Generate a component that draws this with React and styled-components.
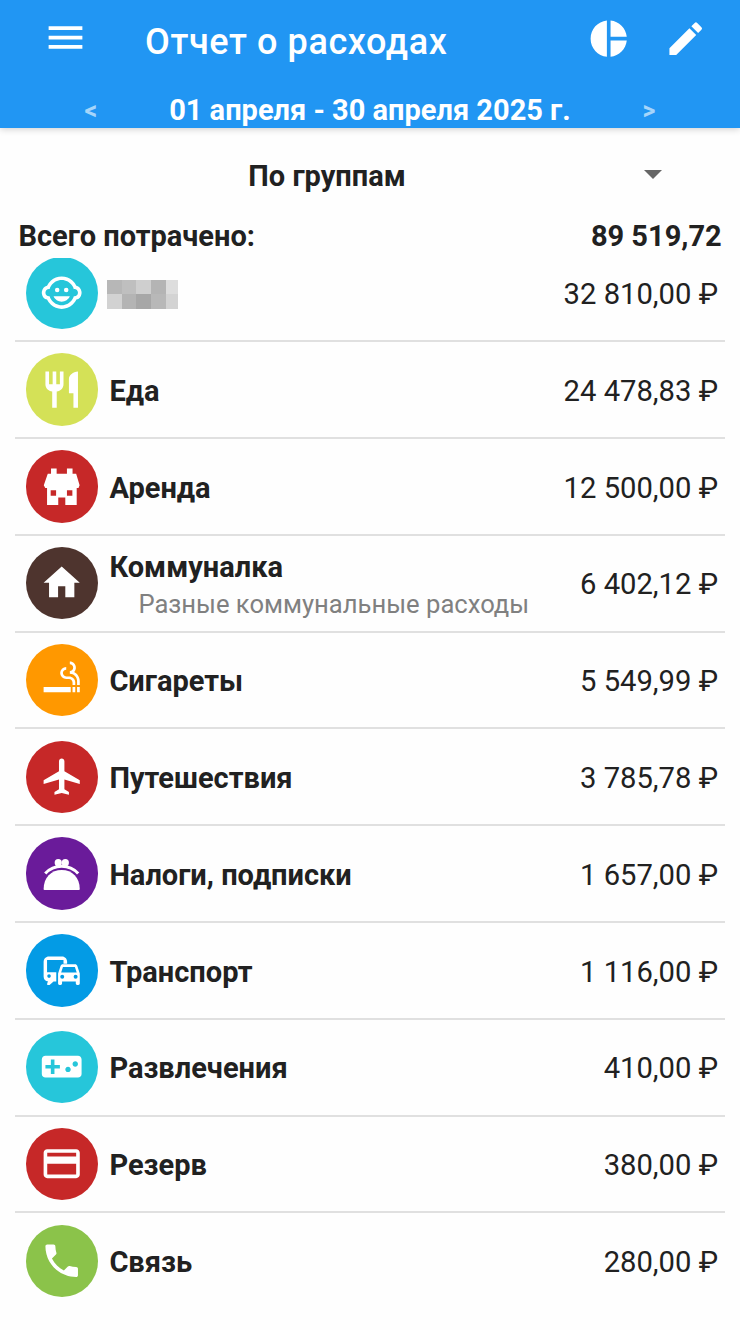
import React from 'react';
import styled, { createGlobalStyle } from 'styled-components';
import {
  MdMenu, MdPieChart, MdEdit, MdChildCare, MdRestaurant, MdHome, MdSmokingRooms,
  MdLocalAirport, MdVideogameAsset, MdCreditCard, MdPhone,
} from 'react-icons/md';

const GlobalStyle = createGlobalStyle`
  *, *::before, *::after { box-sizing: border-box; }
  body { margin: 0; background: #fff; color: #212121; font-family: Roboto, sans-serif; }
`;

const Screen = styled.div`
  display: flex;
  flex-direction: column;
  width: 740px;
  height: 1330px;
  overflow: hidden;
  background: #fefefe;
`;

const Header = styled.header`
  flex: none;
  height: 128px;
  color: #fff;
  background: #2196f3;
  box-shadow: 0 1px 7px rgba(0, 0, 0, 0.2);
`;

const Toolbar = styled.div`
  display: flex;
  align-items: center;
  height: 78px;
  padding: 0 33px 0 42.5px;
`;

const IconButton = styled.button`
  display: flex;
  flex: none;
  padding: 0 0 ${({ $lift = 0 }) => $lift}px;
  border: 0;
  color: inherit;
  background: none;
  margin-left: ${({ $gap = 0 }) => $gap}px;
`;

const Title = styled.h1`
  flex: 1;
  margin: 5px 0 0 57.5px;
  font-size: 36px;
  font-weight: 500;
  line-height: 44px;
  letter-spacing: 0.6px;
  white-space: nowrap;
`;

const PeriodBar = styled.div`
  display: flex;
  align-items: center;
  justify-content: space-between;
  height: 50px;
  padding: 15px 84.5px 0;
`;

const PeriodArrow = styled.button`
  padding: 0;
  border: 0;
  color: #a6d5fa;
  background: none;
  font: 700 25px/30px Roboto, sans-serif;
`;

const Period = styled.span`
  font-size: 29px;
  font-weight: 700;
  line-height: 33px;
  white-space: nowrap;
`;

const GroupSelect = styled.div`
  display: grid;
  grid-template-columns: 1fr 18px;
  align-items: center;
  flex: none;
  height: 93px;
  padding: 2px 78px 0 10px;
`;

const GroupLabel = styled.span`
  font-size: 29px;
  font-weight: 700;
  line-height: 34px;
  text-align: center;
`;

const Caret = styled.span`
  width: 18px;
  border: 9px solid transparent;
  border-top-color: #666;
  border-bottom: 0;
  margin-bottom: 3px;
`;

const Total = styled.div`
  display: flex;
  flex: none;
  justify-content: space-between;
  height: 37px;
  padding: 0 18.3px 0 18.5px;
  font-size: 29px;
  font-weight: 700;
  line-height: 31px;
`;

const List = styled.ul`
  flex: 1;
  margin: 0;
  padding: 0 15px;
  overflow: hidden;
  list-style: none;
`;

const Row = styled.li`
  display: flex;
  align-items: center;
  height: 96.8px;
  padding: 0 7px 0 10.6px;
  border-bottom: 2px solid #e0e0e0;

  &:first-child { margin-top: -12.6px; }
  &:last-child { border-bottom-color: transparent; }
`;

const Badge = styled.span`
  display: flex;
  flex: none;
  align-items: center;
  justify-content: center;
  width: 72.5px;
  height: 72.5px;
  border-radius: 50%;
  color: #fff;
  background: ${({ $color }) => $color};

  svg { margin-right: 0.6px; }
`;

const Info = styled.div`
  flex: 1;
  padding: ${({ $tall }) => ($tall ? 4 : 2.6)}px 0 0 11.3px;
`;

const Name = styled.div`
  font-size: 29px;
  font-weight: 700;
  line-height: 34px;
`;

const Note = styled.div`
  padding: 3px 0 0 29px;
  color: #808080;
  font-size: 25.6px;
  line-height: 34px;
  white-space: nowrap;
`;

const Amount = styled.span`
  padding-top: 2.6px;
  font-size: 29.2px;
  line-height: 34px;
  white-space: nowrap;
`;

const Mosaic = styled.div`
  display: grid;
  grid-template-columns: repeat(4, 14.7px) 12px;
  grid-auto-rows: 14.5px;
  width: 71px;
  margin-left: -2.4px;
`;

const Tile = styled.span`
  background: ${({ $color }) => $color};
`;

const Cottage = () => (
  <svg width="43.4" height="43.4" viewBox="0 0 24 24" fill="currentColor">
    <path fillRule="evenodd" d="M6.1 1.900h3.100v2.900h5.700V1.900H18v2.900h2l1.900 6.400-.6 1.500h-1v9.400h-6.300V18h-3.900v4.100H3.900v-9.400h-1L2.100 11.200 4.300 4.800h1.800zM5.900 14v3h3v-3zm9 0v3h3v-3z" />
  </svg>
);

const Purse = () => (
  <svg width="43.4" height="43.4" viewBox="0 0 24 24">
    <path fill="currentColor" d="M2 20.600C2 14 6.200 9.900 12 9.900S22 14 22 20.600q0 .4-.5.4h-19q-.5 0-.5-.4z" />
    <path fill="none" stroke="currentColor" strokeWidth="1.700" d="M2.900 11.900C5.300 9.300 8.400 7.900 12 7.900s6.700 1.400 9.100 4" />
    <circle cx="10.100" cy="5.900" r="2" fill="currentColor" />
    <circle cx="14" cy="5.900" r="2" fill="currentColor" />
  </svg>
);

const BusAndCar = () => (
  <svg width="43.4" height="43.4" viewBox="0 0 24 24" fill="currentColor">
    <path fillRule="evenodd" d="M12.200 4.100H4.900C3.300 4.100 2 5.400 2 7v8.200c0 1.500 1 2.600 2.500 2.800L4 18.800v1.100h1.300L7.500 18H9v-5.100H3.900V6.100H13v2h2V7c0-1.600-1.200-2.900-2.800-2.900zM5 14a1 1 0 1 1 0 2 1 1 0 0 1 0-2z" />
    <path fillRule="evenodd" d="M20.600 9.300c-.2-.6-.6-.9-1.200-.9h-6.800c-.6 0-1 .3-1.200.9L10 13.500V19c0 .5.300.9.800.9h.6c.5 0 .8-.4.8-.9v-1h7.600v1c0 .5.300.9.800.9h.6c.5 0 .8-.4.8-.9v-5.500zM12.700 9.900h6.600l1 3.100h-8.600zM12.300 14.200a1.100 1.100 0 1 1 0 2.200 1.100 1.100 0 0 1 0-2.200zm7.400 0a1.100 1.100 0 1 1 0 2.200 1.100 1.100 0 0 1 0-2.200z" />
  </svg>
);

const MOSAIC = ['#b7b7b7', '#bfbfbf', '#cfcfcf', '#b4b4b4', '#dddddd', '#d2d2d2', '#b4b4b4', '#a7a7a7', '#b8b8b8', '#d3d3d3'];

const EXPENSES = [
  { amount: '32 810,00 ₽', color: '#26c6da', Icon: MdChildCare },
  { name: 'Еда', amount: '24 478,83 ₽', color: '#d4e157', Icon: MdRestaurant },
  { name: 'Аренда', amount: '12 500,00 ₽', color: '#c62828', Icon: Cottage },
  { name: 'Коммуналка', note: 'Разные коммунальные расходы', amount: '6 402,12 ₽', color: '#4e342e', Icon: MdHome },
  { name: 'Сигареты', amount: '5 549,99 ₽', color: '#ff9800', Icon: MdSmokingRooms },
  { name: 'Путешествия', amount: '3 785,78 ₽', color: '#c62828', Icon: MdLocalAirport },
  { name: 'Налоги, подписки', amount: '1 657,00 ₽', color: '#6a1b9a', Icon: Purse },
  { name: 'Транспорт', amount: '1 116,00 ₽', color: '#039be5', Icon: BusAndCar },
  { name: 'Развлечения', amount: '410,00 ₽', color: '#26c6da', Icon: MdVideogameAsset },
  { name: 'Резерв', amount: '380,00 ₽', color: '#c62828', Icon: MdCreditCard },
  { name: 'Связь', amount: '280,00 ₽', color: '#8bc34a', Icon: MdPhone },
];

export default function App() {
  return (
    <Screen>
      <GlobalStyle />
      <Header>
        <Toolbar>
          <IconButton aria-label="Меню" $lift={3}><MdMenu size={45} /></IconButton>
          <Title>Отчет о расходах</Title>
          <IconButton aria-label="Диаграмма"><MdPieChart size={43.4} /></IconButton>
          <IconButton aria-label="Изменить" $gap={33}><MdEdit size={43.4} /></IconButton>
        </Toolbar>
        <PeriodBar>
          <PeriodArrow>&lt;</PeriodArrow>
          <Period>01 апреля - 30 апреля 2025 г.</Period>
          <PeriodArrow>&gt;</PeriodArrow>
        </PeriodBar>
      </Header>
      <GroupSelect>
        <GroupLabel>По группам</GroupLabel>
        <Caret />
      </GroupSelect>
      <Total>
        <span>Всего потрачено:</span>
        <span>89 519,72</span>
      </Total>
      <List>
        {EXPENSES.map(({ name, note, amount, color, Icon }) => (
          <Row key={amount}>
            <Badge $color={color}><Icon size={43.4} /></Badge>
            <Info $tall={Boolean(note)}>
              {name ? <Name>{name}</Name> : (
                <Mosaic>{MOSAIC.map((tile, i) => <Tile key={i} $color={tile} />)}</Mosaic>
              )}
              {note && <Note>{note}</Note>}
            </Info>
            <Amount>{amount}</Amount>
          </Row>
        ))}
      </List>
    </Screen>
  );
}
